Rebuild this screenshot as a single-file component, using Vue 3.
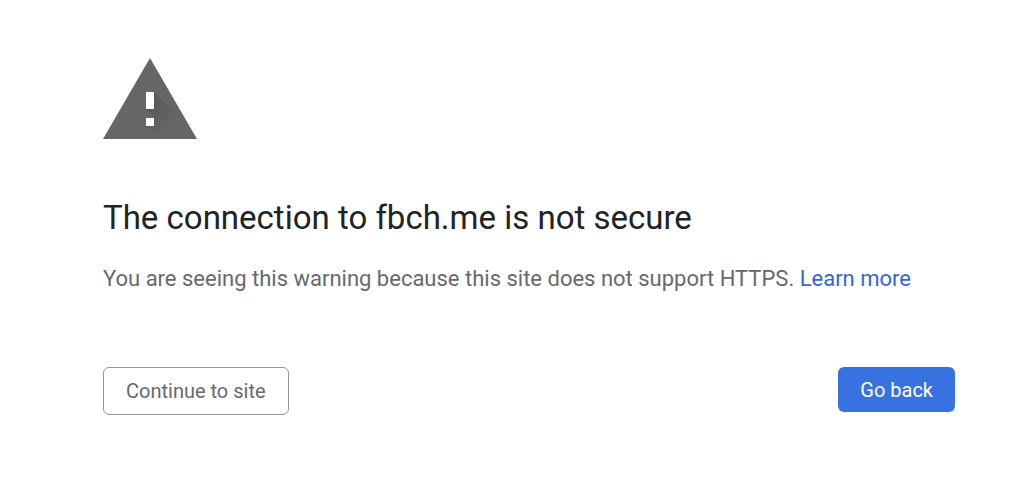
<script setup>
const host = 'fbch.me'
</script>

<template>
  <main class="page">
    <svg class="warning" viewBox="0 0 94 82" aria-hidden="true">
      <defs>
        <linearGradient id="shade" x1="46" y1="52" x2="66" y2="72" gradientUnits="userSpaceOnUse">
          <stop offset="0" stop-color="#5a5a5a" />
          <stop offset="1" stop-color="#666" />
        </linearGradient>
      </defs>
      <path d="M47 0 94 81H0z" fill="#666" />
      <path d="M51 34 77 60 89 81H56L43 68 51 60V59L43 51H51z" fill="url(#shade)" />
      <path d="M43 34h8v17h-8zM43 60h8v8h-8z" fill="#fff" />
    </svg>
    <h1>The connection to {{ host }} is not secure</h1>
    <p>You are seeing this warning because this site does not support HTTPS. <a href="#">Learn more</a></p>
    <div class="actions">
      <button type="button" class="secondary">Continue to site</button>
      <button type="button" class="primary">Go back</button>
    </div>
  </main>
</template>

<style>
body {
  background: #fff;
}
</style>

<style scoped>
.page {
  padding: 58px 69px 84px 103px;
  font-family: Roboto, "Liberation Sans", sans-serif;
  color: #66696d;
}
.warning {
  display: block;
  width: 94px;
  height: 82px;
}
h1 {
  margin: 56px 0 0;
  font-size: 33px;
  line-height: 44px;
  font-weight: 400;
  color: #222326;
}
p {
  margin: 23px 0 0;
  font-size: 22px;
  line-height: 32px;
}
a {
  color: #3367d6;
  text-decoration: none;
}
.actions {
  display: flex;
  justify-content: space-between;
  align-items: flex-start;
  margin-top: 72px;
}
button {
  box-sizing: border-box;
  padding: 0 22px;
  border-radius: 6px;
  font: 400 20px/24px Roboto, "Liberation Sans", sans-serif;
}
.secondary {
  height: 48px;
  border: 1px solid #92969b;
  background: #fff;
  color: #66696d;
}
.primary {
  height: 45px;
  border: 0;
  background: #3871e0;
  color: #fff;
}
</style>
